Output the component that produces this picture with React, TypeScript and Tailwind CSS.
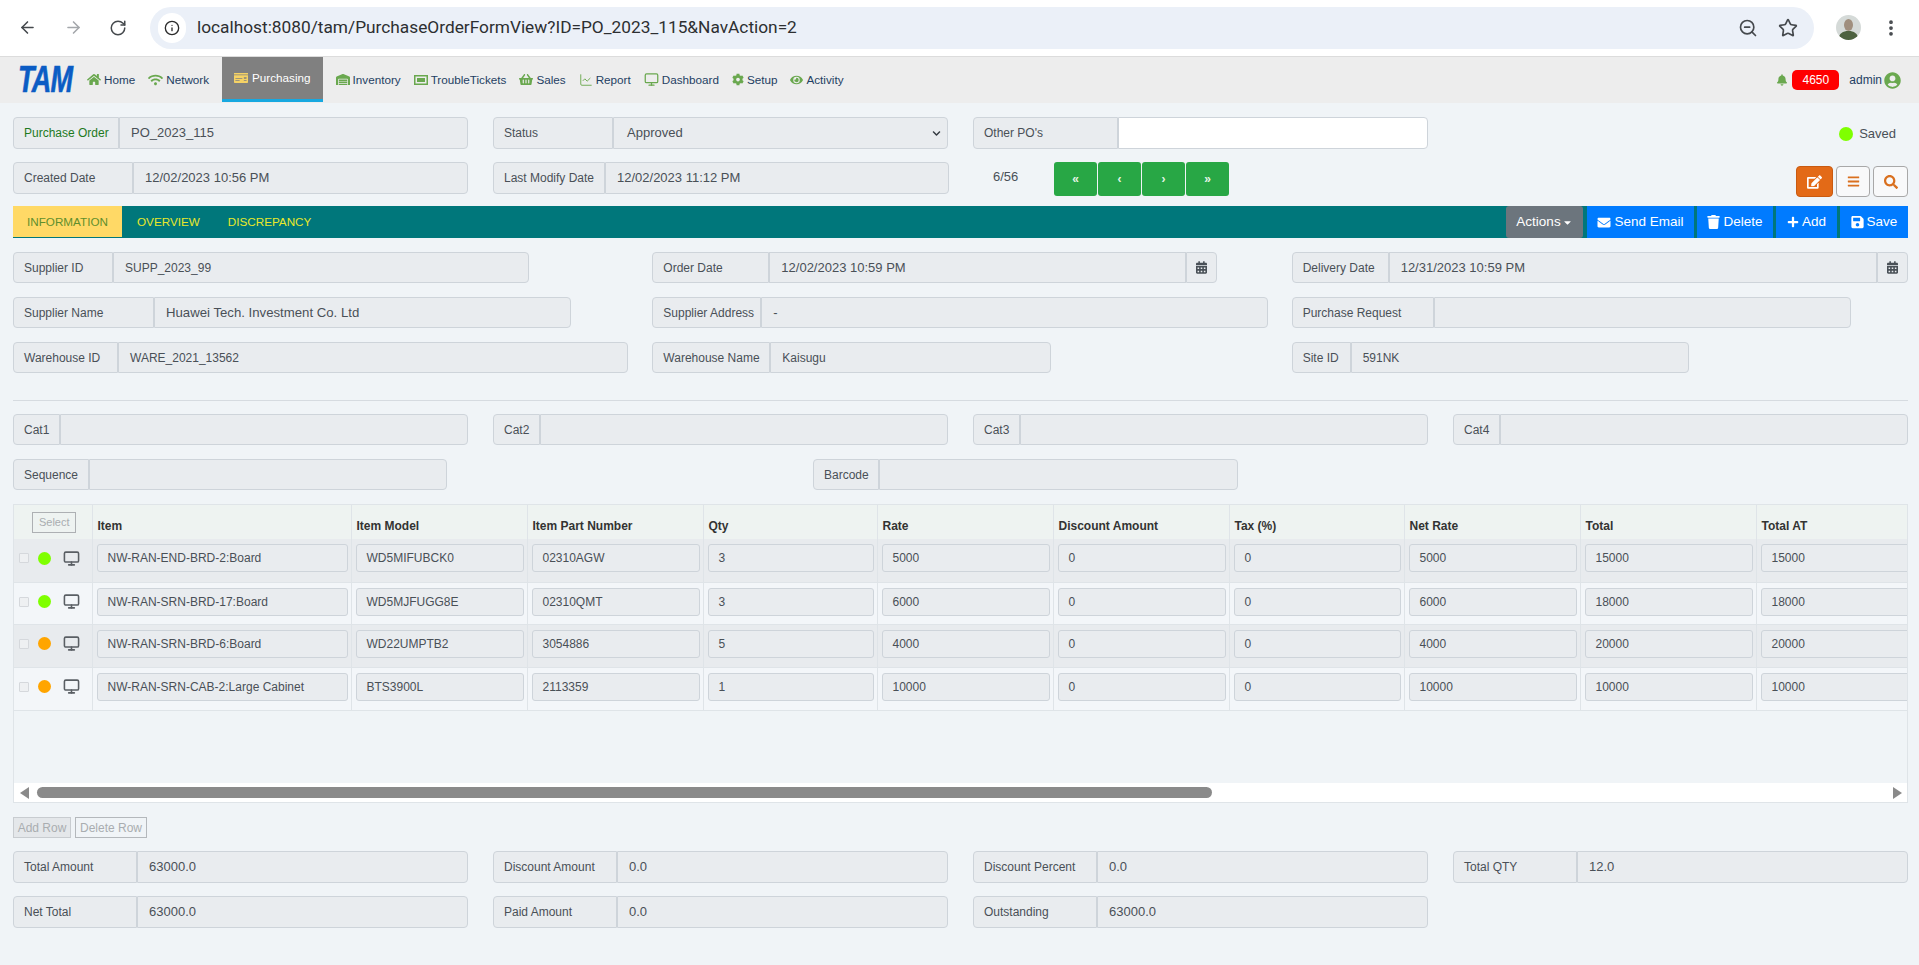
import { ArrowLeft, ArrowRight, RotateCw, Info, ZoomOut, Star, EllipsisVertical, Monitor, ChartLine } from "lucide-react"
import {
  FaHome, FaWifi, FaMoneyCheck, FaWarehouse, FaShoppingBasket, FaCog, FaEye, FaBell, FaUserCircle,
  FaCalendarAlt, FaEnvelope, FaTrash, FaPlus, FaSave, FaEdit, FaBars, FaSearch, FaCaretDown, FaChevronDown,
} from "react-icons/fa"
import type { ReactNode } from "react"

const box = "flex items-center border border-[#ced4da] bg-[#e9ecef] text-[#495057]"

function Field({
  label,
  value,
  labelW,
  valueW,
  white,
  h = "h-[32px]",
  size = "text-[13px]",
  labelClass,
}: {
  label: string
  value?: string
  labelW: string
  valueW: string
  white?: boolean
  h?: string
  size?: string
  labelClass?: string
}) {
  return (
    <div className="flex">
      <div className={`${box} ${h} ${labelW} shrink-0 rounded-l-[4px] pl-[10px] text-[12px] whitespace-nowrap ${labelClass ?? ""}`}>{label}</div>
      <div
        className={`${h} flex items-center border border-[#ced4da] text-[#495057] ${valueW} shrink-0 rounded-r-[4px] pl-[11px] ${size} whitespace-nowrap ${
          white ? "bg-white" : "bg-[#e9ecef]"
        }`}
      >
        {value}
      </div>
    </div>
  )
}

function DateField({ label, value, labelW, valueW }: { label: string; value: string; labelW: string; valueW: string }) {
  return (
    <div className="flex">
      <div className={`${box} h-[31px] ${labelW} shrink-0 rounded-l-[4px] pl-[10px] text-[12px] whitespace-nowrap`}>{label}</div>
      <div className={`${box} h-[31px] ${valueW} shrink-0 pl-[11px] text-[13px] whitespace-nowrap`}>{value}</div>
      <div className={`${box} h-[31px] w-[31px] shrink-0 justify-center rounded-r-[4px]`}>
        <FaCalendarAlt className="w-[11px] h-[13px] text-[#495057]" />
      </div>
    </div>
  )
}

const navItems = [
  { name: "Home", icon: <FaHome className="w-[14px] h-[13px]" /> },
  { name: "Network", icon: <FaWifi className="w-[15px] h-[12px]" /> },
  { name: "Purchasing", icon: <FaMoneyCheck className="w-[14px] h-[12px] text-[#f5d265]" />, active: true },
  { name: "Inventory", icon: <FaWarehouse className="w-[14px] h-[13px]" /> },
  {
    name: "TroubleTickets",
    icon: (
      <svg viewBox="0 0 14 10" className="w-[14px] h-[10px]">
        <path fill="currentColor" fillRule="evenodd" d="M0 0h14v10H0zM1.5 1.5v7h11v-7zM3 3h8v4H3z" />
      </svg>
    ),
  },
  { name: "Sales", icon: <FaShoppingBasket className="w-[14px] h-[13px]" /> },
  { name: "Report", icon: <ChartLine className="w-[14px] h-[14px]" strokeWidth={1.6} /> },
  { name: "Dashboard", icon: <Monitor className="w-[15px] h-[15px]" strokeWidth={2} /> },
  { name: "Setup", icon: <FaCog className="w-[12px] h-[13px]" /> },
  { name: "Activity", icon: <FaEye className="w-[13px] h-[12px]" /> },
]

const columns = ["Item", "Item Model", "Item Part Number", "Qty", "Rate", "Discount Amount", "Tax (%)", "Net Rate", "Total", "Total AT"]

const rows = [
  { dot: "bg-[#7fff00]", h: "h-[43px]", cells: ["NW-RAN-END-BRD-2:Board", "WD5MIFUBCK0", "02310AGW", "3", "5000", "0", "0", "5000", "15000", "15000"] },
  { dot: "bg-[#7fff00]", h: "h-[42px]", cells: ["NW-RAN-SRN-BRD-17:Board", "WD5MJFUGG8E", "02310QMT", "3", "6000", "0", "0", "6000", "18000", "18000"] },
  { dot: "bg-[#ffa500]", h: "h-[43px]", cells: ["NW-RAN-SRN-BRD-6:Board", "WD22UMPTB2", "3054886", "5", "4000", "0", "0", "4000", "20000", "20000"] },
  { dot: "bg-[#ffa500]", h: "h-[43px]", cells: ["NW-RAN-SRN-CAB-2:Large Cabinet", "BTS3900L", "2113359", "1", "10000", "0", "0", "10000", "10000", "10000"] },
]

function ActionBtn({ icon, text, w }: { icon: ReactNode; text: string; w: string }) {
  return (
    <button className={`${w} h-[32px] bg-[#007bff] text-white text-[13.5px] font-medium flex items-center justify-center gap-[3px]`}>
      {icon}
      {text}
    </button>
  )
}

export default function App() {
  return (
    <div className="w-[1919px] h-[965px] overflow-hidden bg-[#f0f4f7] font-['Liberation_Sans',Arial,sans-serif]">
      {/* browser bar */}
      <div className="h-[57px] bg-white flex items-center border-b border-[#dcdcdc] pb-[1px]">
        <ArrowLeft className="ml-[18px] w-[19px] h-[19px] text-[#45494d]" strokeWidth={2} />
        <ArrowRight className="ml-[27px] w-[19px] h-[19px] text-[#a4a7ab]" strokeWidth={2} />
        <RotateCw className="ml-[26px] w-[18px] h-[18px] text-[#45494d]" strokeWidth={2} />
        <div className="ml-[23px] w-[1664px] h-[42px] rounded-full bg-[#ebf0f8] flex items-center pl-[8px]">
          <div className="w-[28px] h-[30px] rounded-full bg-white flex items-center justify-center">
            <Info className="w-[16px] h-[16px] text-[#2b2b2b]" strokeWidth={2} />
          </div>
          <span className="ml-[11px] text-[17.3px] text-[#2d2f31] font-['Roboto',sans-serif]">localhost:8080/tam/PurchaseOrderFormView?ID=PO_2023_115&amp;NavAction=2</span>
          <ZoomOut className="ml-auto w-[20px] h-[20px] text-[#45494d]" strokeWidth={2} />
          <Star className="ml-[20px] mr-[16px] w-[20px] h-[20px] text-[#45494d]" strokeWidth={2} />
        </div>
        <svg viewBox="0 0 25 25" className="ml-[22px] w-[25px] h-[25px]">
          <clipPath id="av">
            <circle cx="12.5" cy="12.5" r="12.5" />
          </clipPath>
          <g clipPath="url(#av)">
            <rect width="25" height="25" fill="#d5dad8" />
            <ellipse cx="12.5" cy="10" rx="4.5" ry="6" fill="#a08f7e" />
            <path d="M2 25c1-7 5-9 10.500-9s9 2 10.500 9z" fill="#4d6240" />
          </g>
        </svg>
        <EllipsisVertical className="ml-[20px] w-[20px] h-[20px] text-[#45494d]" strokeWidth={2.5} />
      </div>

      {/* app nav */}
      <div className="h-[46px] bg-[#ededed] flex items-center pl-[18px] pr-[18px] text-[11.7px] text-[#1f3f63]">
        <span className="w-[69px] shrink-0 text-[36px] leading-[36px] font-bold italic text-[#0b5cc4] scale-x-[0.75] origin-left tracking-[-1px] [-webkit-text-stroke:0.6px_#0b5cc4]">TAM</span>
        <div className="flex items-center gap-[13px] h-full">
          {navItems.map((n) =>
            n.active ? (
              <div key={n.name} className="h-[45px] mt-[-1px] bg-[#808080] border-b-[3px] border-[#17a8e0] px-[12px] flex items-center gap-[4px] text-white">
                {n.icon}
                {n.name}
              </div>
            ) : (
              <div key={n.name} className="flex items-center gap-[3px]">
                <span className="text-[#6aa84f] flex">{n.icon}</span>
                {n.name}
              </div>
            ),
          )}
        </div>
        <div className="ml-auto flex items-center text-[12px]">
          <FaBell className="w-[10px] h-[12px] text-[#6aa84f]" />
          <span className="ml-[5px] w-[47px] h-[20px] rounded-[5px] bg-[#ff0000] text-white flex items-center justify-center">4650</span>
          <span className="ml-[10px]">admin</span>
          <FaUserCircle className="ml-[2px] w-[17px] h-[17px] text-[#6aa84f]" />
        </div>
      </div>

      <div className="pl-[13px] pr-[11px] pt-[14px]">
        {/* top rows */}
        <div className="grid grid-cols-4 gap-x-[25px] h-[45px]">
          <Field label="Purchase Order" value="PO_2023_115" labelW="w-[106px]" valueW="w-[349px]" labelClass="!text-[#1e7a1e]" />
          <div className="flex">
            <div className={`${box} h-[32px] w-[120px] rounded-l-[4px] pl-[10px] text-[12px]`}>Status</div>
            <div className={`${box} h-[32px] w-[335px] rounded-r-[4px] pl-[13px] pr-[6px] text-[13px] justify-between`}>
              Approved
              <FaChevronDown className="w-[9px] h-[9px] text-[#343a40]" />
            </div>
          </div>
          <Field label="Other PO's" labelW="w-[145px]" valueW="w-[310px]" white />
          <div className="flex items-center justify-end h-[32px] pr-[12px] text-[13px] text-[#495057]">
            <span className="w-[14px] h-[14px] rounded-full bg-[#7fff00] mr-[6px] mt-[2px]" />
            <span className="mt-[2px]">Saved</span>
          </div>
        </div>
        <div className="grid grid-cols-4 gap-x-[25px] h-[44px]">
          <Field label="Created Date" value="12/02/2023 10:56 PM" labelW="w-[120px]" valueW="w-[335px]" />
          <Field label="Last Modify Date" value="12/02/2023 11:12 PM" labelW="w-[112px]" valueW="w-[344px]" />
          <div className="flex items-start">
            <span className="ml-[20px] mt-[5px] w-[61px] text-[13px] text-[#495057]">6/56</span>
            <div className="flex gap-[1px]">
              {["«", "‹", "›", "»"].map((c) => (
                <button key={c} className="w-[43px] h-[34px] rounded-[3px] bg-[#28a745] text-[#e6f4e6] text-[12px] font-bold flex items-center justify-center">
                  {c}
                </button>
              ))}
            </div>
          </div>
          <div className="flex justify-end gap-[3px] pt-[4px]">
            <button className="w-[37px] h-[31px] rounded-[4px] bg-[#e36a17] border border-[#c95a10] flex items-center justify-center text-white">
              <FaEdit className="w-[15px] h-[14px]" />
            </button>
            <button className="w-[34px] h-[31px] rounded-[4px] bg-[#f8f9fa] border border-[#a8a8a8] flex items-center justify-center text-[#d9701f]">
              <FaBars className="w-[13px] h-[13px]" />
            </button>
            <button className="w-[35px] h-[31px] rounded-[4px] bg-[#f8f9fa] border border-[#a8a8a8] flex items-center justify-center text-[#d9701f]">
              <FaSearch className="w-[14px] h-[14px]" />
            </button>
          </div>
        </div>

        {/* tab bar */}
        <div className="h-[32px] bg-[#00777b] flex items-start text-[11.7px]">
          <div className="w-[109px] h-[31px] bg-[#ffd966] text-[#5f8f2d] flex items-center justify-center">INFORMATION</div>
          <div className="ml-[15px] h-[32px] flex items-center text-[#e8e82a]">OVERVIEW</div>
          <div className="ml-[28px] h-[32px] flex items-center text-[#e8e82a]">DISCREPANCY</div>
          <div className="ml-auto flex gap-[3px]">
            <button className="w-[77px] h-[32px] mr-[1px] rounded-[3px] bg-[#6c757d] text-white text-[13.5px] flex items-center justify-center gap-[1px]">
              Actions
              <FaCaretDown className="w-[11px] h-[11px]" />
            </button>
            <ActionBtn icon={<FaEnvelope className="w-[14px] h-[13px]" />} text="Send Email" w="w-[107px]" />
            <ActionBtn icon={<FaTrash className="w-[13px] h-[14px]" />} text="Delete" w="w-[76px]" />
            <ActionBtn icon={<FaPlus className="w-[12px] h-[12px]" />} text="Add" w="w-[61px]" />
            <ActionBtn icon={<FaSave className="w-[13px] h-[14px]" />} text="Save" w="w-[68px]" />
          </div>
        </div>

        {/* supplier fields */}
        <div className="grid grid-cols-3 gap-x-[23px] gap-y-[14px] mt-[14px]">
          <Field h="h-[31px]" size="text-[12px]" label="Supplier ID" value="SUPP_2023_99" labelW="w-[100px]" valueW="w-[416px]" />
          <DateField label="Order Date" value="12/02/2023 10:59 PM" labelW="w-[117px]" valueW="w-[417px]" />
          <DateField label="Delivery Date" value="12/31/2023 10:59 PM" labelW="w-[97px]" valueW="w-[488px]" />
          <Field h="h-[31px]" size="text-[13.2px]" label="Supplier Name" value="Huawei Tech. Investment Co. Ltd" labelW="w-[141px]" valueW="w-[417px]" />
          <Field h="h-[31px]" label="Supplier Address" value="-" labelW="w-[109px]" valueW="w-[507px]" />
          <Field h="h-[31px]" label="Purchase Request" labelW="w-[142px]" valueW="w-[417px]" />
          <Field h="h-[31px]" size="text-[12px]" label="Warehouse ID" value="WARE_2021_13562" labelW="w-[105px]" valueW="w-[510px]" />
          <Field h="h-[31px]" size="text-[12px]" label="Warehouse Name" value="Kaisugu" labelW="w-[118px]" valueW="w-[281px]" />
          <Field h="h-[31px]" size="text-[12px]" label="Site ID" value="591NK" labelW="w-[59px]" valueW="w-[338px]" />
        </div>

        <div className="mt-[27px] mb-[13px] border-t border-[#d6dbe0]" />

        <div className="grid grid-cols-4 gap-x-[25px]">
          <Field h="h-[31px]" label="Cat1" labelW="w-[47px]" valueW="w-[408px]" />
          <Field h="h-[31px]" label="Cat2" labelW="w-[47px]" valueW="w-[408px]" />
          <Field h="h-[31px]" label="Cat3" labelW="w-[47px]" valueW="w-[408px]" />
          <Field h="h-[31px]" label="Cat4" labelW="w-[47px]" valueW="w-[408px]" />
        </div>
        <div className="flex gap-[366px] mt-[14px]">
          <Field h="h-[31px]" label="Sequence" labelW="w-[76px]" valueW="w-[358px]" />
          <Field h="h-[31px]" label="Barcode" labelW="w-[66px]" valueW="w-[359px]" />
        </div>

        {/* line items table */}
        <div className="mt-[14px] border border-[#dfe4e8] h-[299px] flex flex-col">
          <div className="h-[278px] overflow-hidden">
            <table className="table-fixed w-[1974px] border-collapse text-[12px] text-[#495057]">
              <colgroup>
                <col className="w-[78px]" />
                <col className="w-[259px]" />
                <col className="w-[176px]" />
                <col className="w-[176px]" />
                <col className="w-[174px]" />
                <col className="w-[176px]" />
                <col className="w-[176px]" />
                <col className="w-[175px]" />
                <col className="w-[176px]" />
                <col className="w-[176px]" />
                <col className="w-[232px]" />
              </colgroup>
              <thead>
                <tr className="h-[34px] bg-[#eef3f1]">
                  <th className="border-r border-[#dfe4e8] p-0">
                    <button className="ml-[3px] w-[44px] h-[21px] border border-[#adb0b3] text-[#a9adb0] text-[11px] font-normal">Select</button>
                  </th>
                  {columns.map((c) => (
                    <th key={c} className="border-r border-[#dfe4e8] pl-[5px] pt-[7px] text-left font-bold text-[#333] whitespace-nowrap">
                      {c}
                    </th>
                  ))}
                  <th />
                </tr>
              </thead>
              <tbody>
                {rows.map((r, i) => (
                  <tr key={r.cells[0]} className={`${r.h} ${i % 2 === 0 ? "bg-[#e8ebee]" : "bg-[#f3f6f9]"} border-b border-[#dfe4e8]`}>
                    <td className="border-r border-[#dfe4e8] p-0 pt-[5px] align-top">
                      <div className="h-[28px] flex items-center pl-[5px]">
                        <span className="w-[10px] h-[10px] border border-[#d5d8dc] bg-[#eef0f2] rounded-[1px]" />
                        <span className={`ml-[9px] w-[13px] h-[13px] rounded-full ${r.dot}`} />
                        <Monitor className="ml-[12px] w-[17px] h-[17px] text-[#5a5f64]" strokeWidth={2.2} />
                      </div>
                    </td>
                    {r.cells.map((c, j) => (
                      <td key={j} className="border-r border-[#dfe4e8] pl-[4px] pr-[3px] pt-[5px] pb-0 align-top">
                        <div className="h-[28px] flex items-center pl-[10px] border border-[#ced4da] rounded-[3px] bg-[#e9ecef] whitespace-nowrap overflow-hidden">{c}</div>
                      </td>
                    ))}
                    <td />
                  </tr>
                ))}
              </tbody>
            </table>
          </div>
          <div className="h-[19px] bg-white flex items-center pl-[6px] pr-[5px]">
            <svg viewBox="0 0 9 12" className="w-[9px] h-[12px]">
              <path d="M9 0v12L0 6z" fill="#8a8a8a" />
            </svg>
            <div className="ml-[8px] w-[1175px] h-[11px] rounded-full bg-[#8a8a8a]" />
            <svg viewBox="0 0 9 12" className="ml-auto w-[9px] h-[12px]">
              <path d="M0 0v12l9-6z" fill="#8a8a8a" />
            </svg>
          </div>
        </div>

        <div className="mt-[14px] flex gap-[4px] text-[12px] text-[#a9adb0]">
          <button className="w-[58px] h-[21px] bg-[#e4e7ea] border border-[#c8ccd0] flex items-center justify-center">Add Row</button>
          <button className="w-[72px] h-[21px] border border-[#b4b8bc] flex items-center justify-center">Delete Row</button>
        </div>

        {/* totals */}
        <div className="mt-[13px] grid grid-cols-4 gap-x-[25px] gap-y-[13px]">
          <Field label="Total Amount" value="63000.0" labelW="w-[124px]" valueW="w-[331px]" />
          <Field label="Discount Amount" value="0.0" labelW="w-[124px]" valueW="w-[331px]" />
          <Field label="Discount Percent" value="0.0" labelW="w-[124px]" valueW="w-[331px]" />
          <Field label="Total QTY" value="12.0" labelW="w-[124px]" valueW="w-[331px]" />
          <Field label="Net Total" value="63000.0" labelW="w-[124px]" valueW="w-[331px]" />
          <Field label="Paid Amount" value="0.0" labelW="w-[124px]" valueW="w-[331px]" />
          <Field label="Outstanding" value="63000.0" labelW="w-[124px]" valueW="w-[331px]" />
        </div>
      </div>
    </div>
  )
}
